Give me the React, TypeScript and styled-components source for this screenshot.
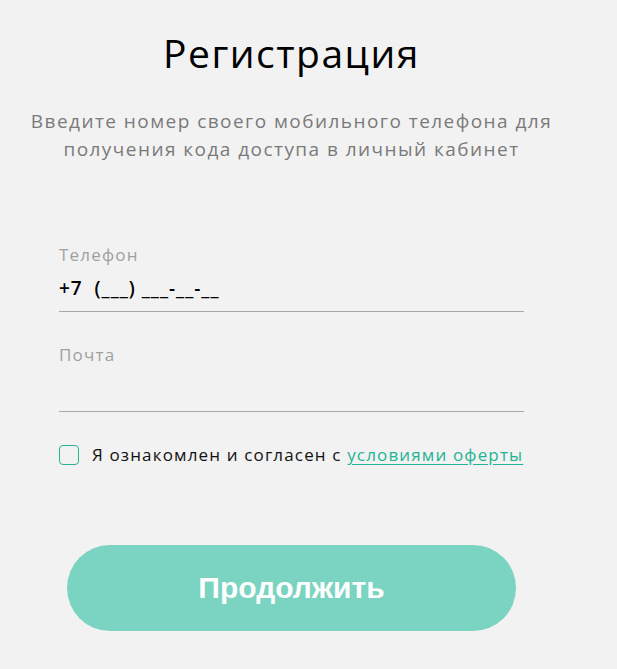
import React, { useState } from 'react';
import styled, { createGlobalStyle } from 'styled-components';

const GlobalStyle = createGlobalStyle`
  html, body {
    margin: 0;
    padding: 0;
    background: #f2f2f2;
  }
  body {
    font-family: 'Open Sans', 'Noto Sans', sans-serif;
  }
`;

const Page = styled.main`
  width: 583px;
  min-height: 669px;
  display: flex;
  flex-direction: column;
  align-items: center;
  box-sizing: border-box;
  padding-top: 26px;
`;

const Title = styled.h1`
  margin: 0;
  font-size: 39px;
  font-weight: 400;
  line-height: 54px;
  color: #000;
  letter-spacing: 1.5px;
`;

const Subtitle = styled.p`
  margin: 27px 0 0;
  font-size: 19px;
  line-height: 28px;
  color: #7a7a7a;
  text-align: center;
  letter-spacing: 1.45px;
`;

const Form = styled.form`
  width: 465px;
  margin-top: 81px;
  display: flex;
  flex-direction: column;
`;

const Field = styled.label<{ $gap?: number }>`
  display: flex;
  flex-direction: column;
  padding-bottom: 9px;
  border-bottom: 1px solid #a8a8a8;
  margin-bottom: ${({ $gap }) => $gap ?? 0}px;
`;

const FieldLabel = styled.span`
  font-size: 17px;
  line-height: 22px;
  color: #a0a0a0;
  letter-spacing: 1.2px;
`;

const FieldInput = styled.input`
  border: none;
  background: transparent;
  outline: none;
  padding: 0;
  margin-top: 7px;
  height: 29px;
  font-family: inherit;
  font-size: 19px;
  font-weight: 600;
  color: #000;
  letter-spacing: 1px;
  &::placeholder {
    color: #000;
  }
`;

const AgreeRow = styled.label`
  display: flex;
  align-items: center;
  gap: 13px;
  margin-top: 31px;
  font-size: 17px;
  color: #111;
  letter-spacing: 1.15px;
  cursor: pointer;
`;

const Box = styled.span<{ $checked: boolean }>`
  width: 18px;
  height: 18px;
  border: 1.5px solid #26b593;
  border-radius: 4px;
  background: ${({ $checked }) => ($checked ? '#26b593' : 'transparent')};
  flex-shrink: 0;
`;

const HiddenCheck = styled.input`
  display: none;
`;

const OfferLink = styled.a`
  color: #1fb493;
  text-decoration: underline;
  text-underline-offset: 3px;
`;

const SubmitButton = styled.button`
  width: 449px;
  height: 86px;
  margin-top: 79px;
  border: none;
  border-radius: 43px;
  background: #7bd3c1;
  color: #fff;
  font-family: 'Liberation Sans', Arial, sans-serif;
  font-size: 30px;
  font-weight: 700;
  cursor: pointer;
`;

export default function App() {
  const [agreed, setAgreed] = useState(false);

  return (
    <>
      <GlobalStyle />
      <Page>
        <Title>Регистрация</Title>
        <Subtitle>
          Введите номер своего мобильного телефона для
          <br />
          получения кода доступа в личный кабинет
        </Subtitle>
        <Form onSubmit={(e) => e.preventDefault()}>
          <Field $gap={32}>
            <FieldLabel>Телефон</FieldLabel>
            <FieldInput placeholder="+7  (___) ___-__-__" />
          </Field>
          <Field>
            <FieldLabel>Почта</FieldLabel>
            <FieldInput type="email" />
          </Field>
          <AgreeRow>
            <HiddenCheck type="checkbox" checked={agreed} onChange={(e) => setAgreed(e.target.checked)} />
            <Box $checked={agreed} />
            <span>
              Я ознакомлен и согласен с <OfferLink href="#">условиями оферты</OfferLink>
            </span>
          </AgreeRow>
        </Form>
        <SubmitButton type="button">Продолжить</SubmitButton>
      </Page>
    </>
  );
}
